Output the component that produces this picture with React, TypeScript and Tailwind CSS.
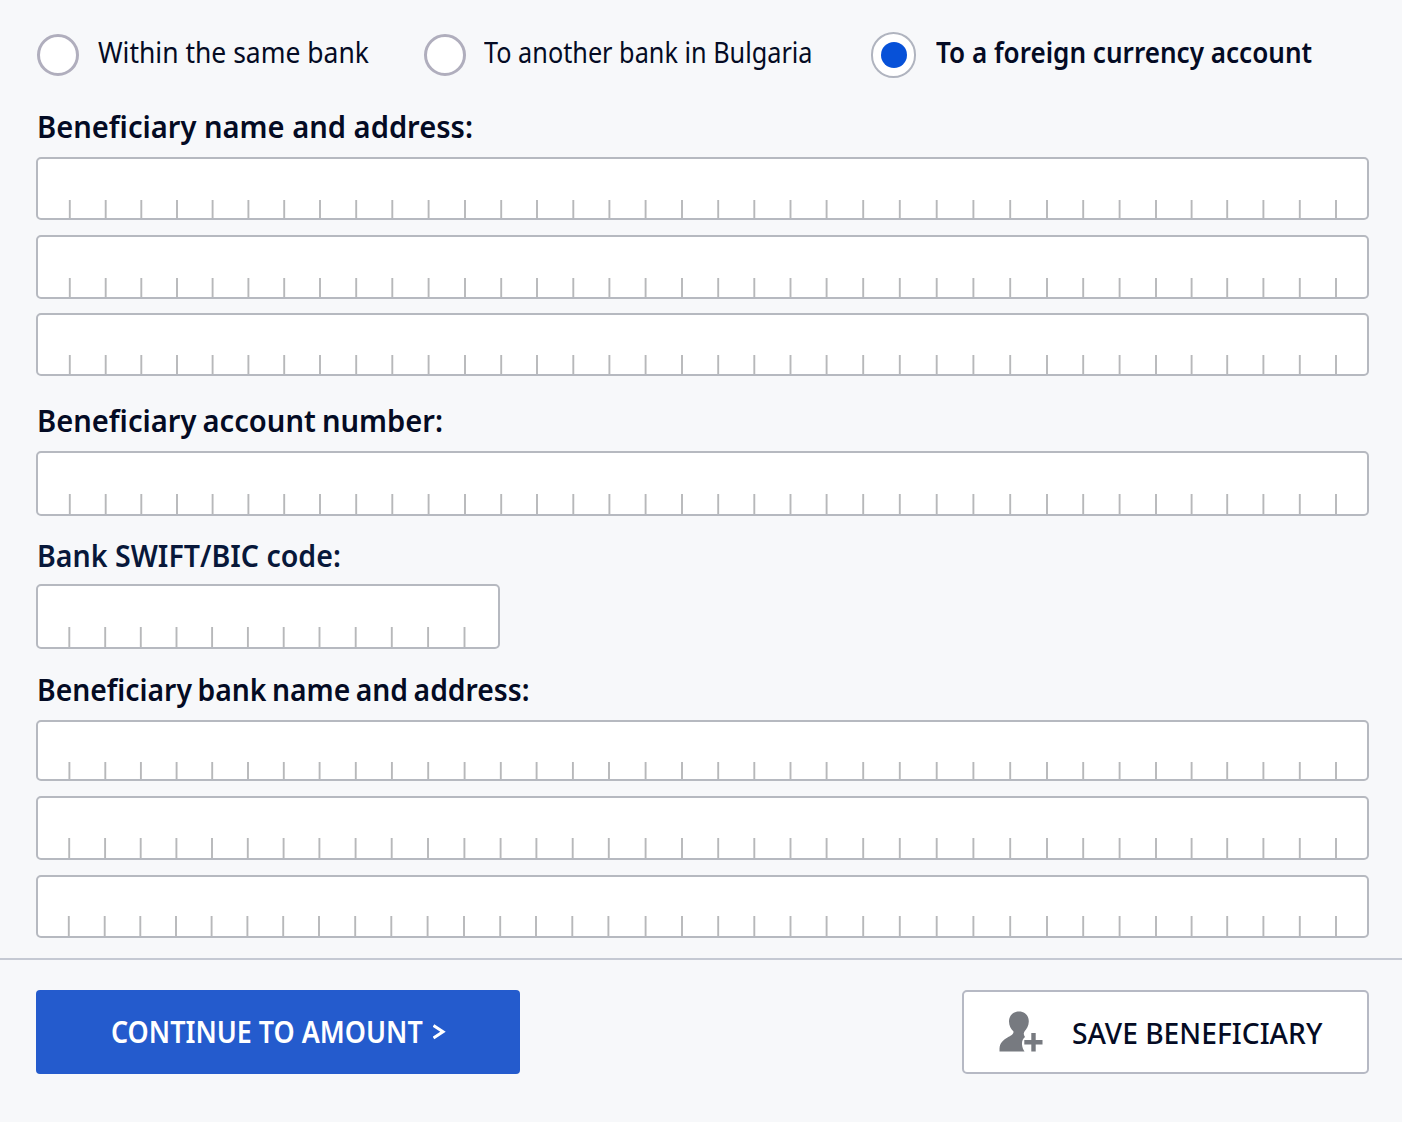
import React from 'react';

const ticks = [
  69.8, 105.7, 141.3, 177, 212.6, 248.4, 284.2, 320, 356.2, 392.3, 428.6, 465, 501.2, 537, 573.3, 609.4, 645.6,
  682, 718.2, 754.3, 790.5, 826.6, 863.2, 899.8, 936.7, 973.4, 1010.2, 1047, 1083.2, 1119.6, 1156, 1191.6, 1227.2,
  1263.4, 1299.8, 1336,
];

interface CharFieldProps {
  className: string;
  tickHeight: number;
  count?: number;
  shift?: number;
}

const CharField: React.FC<CharFieldProps> = ({ className, tickHeight, count = 36, shift = 0 }) => (
  <div className={`relative overflow-hidden rounded-[5px] border-2 border-[#b6b9c0] bg-white ${className}`}>
    <svg className="absolute bottom-0 left-0 h-full w-full" aria-hidden="true">
      <svg y="100%" overflow="visible">
        {ticks.slice(0, count).map((x, i) => {
          const left = x - 38 - (i < 16 ? shift : 0);
          return <line key={x} x1={left} x2={left} y1={-tickHeight} y2={0} stroke="#b7b8ba" strokeWidth={1.9} />;
        })}
      </svg>
    </svg>
  </div>
);

const heading = "ml-[0.5px] w-fit origin-left whitespace-nowrap font-semibold text-[30.5px] leading-[40px]";
const radioText = 'origin-left whitespace-nowrap text-[28.5px] leading-[40px] pb-[7px]';

const App: React.FC = () => {
  return (
    <div className="h-[1122px] w-[1402px] overflow-hidden bg-[#f7f8fa] font-['Noto_Sans',sans-serif] text-[#040b24]">
      <form className="px-9 pt-8">
        {/* Transfer type */}
        <div className="flex h-[46px] items-center">
          <label className="flex w-[387px] items-center">
            <span className="ml-px h-[42px] w-[42px] shrink-0 rounded-full border-[3px] border-[#b0aebd] bg-white" />
            <span className={`${radioText} ml-[19px] scale-x-[0.929]`}>Within the same bank</span>
          </label>
          <label className="flex w-[448px] items-center">
            <span className="ml-px h-[42px] w-[42px] shrink-0 rounded-full border-[3px] border-[#b0aebd] bg-white" />
            <span className={`${radioText} ml-[18px] scale-x-[0.886]`}>To another bank in Bulgaria</span>
          </label>
          <label className="flex items-center">
            <span className="flex h-[46px] w-[45px] shrink-0 items-center justify-center rounded-full border-2 border-[#b0b4bf] bg-white">
              <span className="h-[26px] w-[26px] rounded-full bg-[#0751d8]" />
            </span>
            <span className={`${radioText} ml-5 scale-x-[0.915] font-semibold`}>To a foreign currency account</span>
          </label>
        </div>

        {/* Beneficiary */}
        <h2 className={`${heading} mt-7 scale-x-[0.955]`}>Beneficiary name and address:</h2>
        <CharField className="mt-[11px] h-[63px] w-[1333px]" tickHeight={18} />
        <CharField className="mt-[15px] h-16 w-[1333px]" tickHeight={19} />
        <CharField className="mt-[14px] h-[63px] w-[1333px]" tickHeight={19} />

        <h2 className={`${heading} mt-6 scale-x-[0.955] [word-spacing:-1.5px]`}>Beneficiary account number:</h2>
        <CharField className="mt-[11px] h-[65px] w-[1333px]" tickHeight={20} />

        <h2 className={`${heading} mt-[19px] scale-x-[0.936] text-[#08183a]`}>Bank SWIFT/BIC code:</h2>
        <CharField className="mt-[9px] h-[65px] w-[464px]" tickHeight={20} count={12} shift={0.5} />

        {/* Beneficiary bank */}
        <h2 className={`${heading} mt-5 scale-x-[0.928] [word-spacing:-2px]`}>Beneficiary bank name and address:</h2>
        <CharField className="mt-[11px] h-[61px] w-[1333px]" tickHeight={17} shift={0.4} />
        <CharField className="mt-[15px] h-16 w-[1333px]" tickHeight={20} shift={0.6} />
        <CharField className="mt-[15px] h-[63px] w-[1333px]" tickHeight={20} shift={1} />
      </form>

      {/* Actions */}
      <div className="mt-5 flex justify-between border-t-2 border-[#c5c9d3] pl-9 pr-[33px] pt-[30px]">
        <button className="flex h-[84px] w-[484px] items-center rounded-[4px] bg-[#245bcd] pb-px pl-[75px] font-semibold text-white">
          <span className="w-[322px] origin-left scale-x-[0.882] whitespace-nowrap text-left text-[30.5px]">CONTINUE TO AMOUNT</span>
          <svg className="mt-px h-[18px] w-[14px]" viewBox="0 0 14 18" fill="none" stroke="currentColor" strokeWidth="3">
            <path d="M0.5 2.500 10 8.700 0.500 15" />
          </svg>
        </button>
        <button className="flex h-[84px] w-[407px] items-center rounded-[5px] border-2 border-[#b6b9c4] bg-white pl-[35px] font-medium">
          <svg className="mb-[2px] h-[41px] w-[44px] shrink-0" viewBox="0 0 44 41" fill="#777a80">
            <path d="M20 0.5C26 .5 29.800 4.800 29.800 10.500C29.800 15 27.500 18 25.500 20.500C24.300 22.500 24.600 24 26 26C24 27.500 22.700 30 23 33.500C23.200 36.500 24.300 38.500 25.500 40.500H.5V37.500C.8 32 4 29 8.500 26.500C12 24.600 14.700 23.500 14.500 20.500C12 18 10 15 10 10.500C10 4.800 14 .5 20 .5Z" />
            <path d="M32.300 22h4.400v7H43.500v4.400H36.700v7h-4.400v-7H25.300V29H32.300Z" />
          </svg>
          <span className="ml-[29px] origin-left scale-x-[0.962] whitespace-nowrap pt-[3px] text-[29.3px]">SAVE BENEFICIARY</span>
        </button>
      </div>
    </div>
  );
};

export default App;
